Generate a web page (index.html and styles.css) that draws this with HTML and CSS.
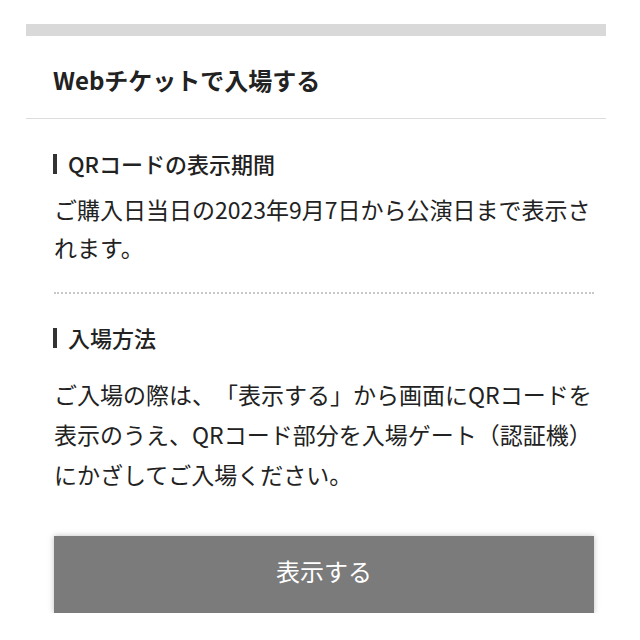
FILE: index.html
```html
<!DOCTYPE html>
<html lang="ja">
<head>
    <meta charset="UTF-8">
    <meta name="viewport" content="width=device-width, initial-scale=1.0">
    <title>Webチケットで入場する</title>
    <link rel="stylesheet" href="styles.css">
</head>
<body>
    <div class="card">
        <div class="top-bar"></div>
        <h1 class="card-title">Webチケットで入場する</h1>

        <div class="card-body">
            <section class="info first">
                <h2 class="info-head">QRコードの表示期間</h2>
                <p class="info-text">ご購入日当日の2023年9月7日から公演日まで表示されます。</p>
            </section>

            <section class="info second">
                <h2 class="info-head">入場方法</h2>
                <p class="info-text">ご入場の際は、「表示する」から画面にQRコードを表示のうえ、QRコード部分を入場ゲート（認証機）にかざしてご入場ください。</p>
            </section>

            <button class="show-btn">表示する</button>
        </div>
    </div>
</body>
</html>
```

FILE: styles.css
```css
body {
    margin: 0;
    padding-top: 24px;
    background: #fff;
    color: #222;
    font-family: "Noto Sans CJK JP", "Noto Sans", sans-serif;
    text-spacing-trim: space-all;
}

.card {
    width: 580px;
    margin-left: 26px;
}

.top-bar {
    height: 12px;
    background: #d9d9d9;
}

.card-title {
    margin: 0;
    padding: 28px 27px 22px;
    font-size: 24px;
    line-height: 32px;
    font-weight: 700;
    border-bottom: 1px solid #ddd;
}

.card-body {
    padding: 0 12px 0 28px;
}

.info-head {
    position: relative;
    margin: 0;
    padding-left: 14px;
    font-size: 22px;
    line-height: 28px;
    font-weight: 500;
}

/* 見出し左の縦線 */
.info-head::before {
    content: "";
    position: absolute;
    left: -1px;
    top: 5px;
    width: 4px;
    height: 20px;
    background: #333;
}

.info-text {
    margin: 0;
    font-size: 23px;
}

.info.first {
    padding: 30px 0 26px;
    border-bottom: 2px dotted #c8c8c8;
}

.info.first .info-text {
    margin-top: 13px;
    line-height: 38px;
}

.info.second {
    padding-top: 29px;
}

.info.second .info-text {
    margin-top: 23px;
    line-height: 40px;
}

.show-btn {
    display: block;
    width: 100%;
    height: 77px;
    margin-top: 42px;
    padding: 0 0 9px;
    border: none;
    background: #7b7b7b;
    color: #fff;
    font-family: inherit;
    font-size: 24px;
    box-shadow: 0 0 6px rgba(0, 0, 0, 0.25);
    cursor: pointer;
}
```
